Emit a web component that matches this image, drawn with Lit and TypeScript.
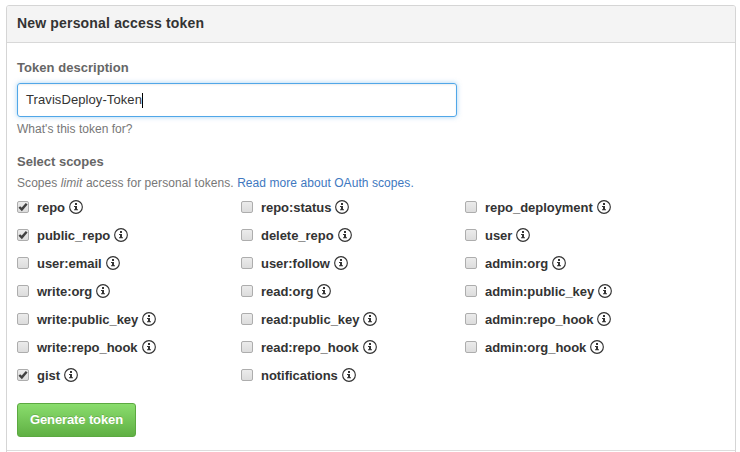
import { LitElement, html, css } from "lit";
import { customElement, property } from "lit/decorators.js";
import { classMap } from "lit/directives/class-map.js";

interface Scope {
  name: string;
  checked?: boolean;
}

const SCOPES: Scope[] = [
  { name: "repo", checked: true },
  { name: "repo:status" },
  { name: "repo_deployment" },
  { name: "public_repo", checked: true },
  { name: "delete_repo" },
  { name: "user" },
  { name: "user:email" },
  { name: "user:follow" },
  { name: "admin:org" },
  { name: "write:org" },
  { name: "read:org" },
  { name: "admin:public_key" },
  { name: "write:public_key" },
  { name: "read:public_key" },
  { name: "admin:repo_hook" },
  { name: "write:repo_hook" },
  { name: "read:repo_hook" },
  { name: "admin:org_hook" },
  { name: "gist", checked: true },
  { name: "notifications" },
];

@customElement("scope-option")
export class ScopeOption extends LitElement {
  @property() name = "";
  @property({ type: Boolean }) checked = false;

  static styles = css`
    :host {
      display: flex;
      align-items: center;
      height: 28px;
    }
    .box {
      box-sizing: border-box;
      width: 12px;
      height: 12px;
      border: 1px solid #adadad;
      border-radius: 2px;
      background: linear-gradient(#ebebeb, #dcdcdc);
      margin-right: 8px;
      display: flex;
    }
    .box svg {
      display: block;
      width: 10px;
      height: 10px;
    }
    .name {
      padding-top: 2px;
      font-weight: bold;
      letter-spacing: -0.04px;
    }
    .info {
      width: 14px;
      height: 14px;
      margin-left: 4px;
    }
  `;

  render() {
    return html`
      <span class=${classMap({ box: true, on: this.checked })}>
        ${this.checked
          ? html`<svg viewBox="0 0 10 10"><path d="M1.3 5 L3.8 7.4 L8.7 1.8" fill="none" stroke="#404040" stroke-width="2.4" /></svg>`
          : ""}
      </span>
      <span class="name">${this.name}</span>
      <svg class="info" viewBox="0 0 14 14">
        <circle cx="7" cy="7" r="6.35" fill="none" stroke="#333" stroke-width="1.15" />
        <path d="M6 3.1h2v1.8H6zM5 6h3v3.2h1v1H5v-1h1V7H5z" fill="#333" />
      </svg>
    `;
  }
}

@customElement("app-root")
export class AppRoot extends LitElement {
  static styles = css`
    :host {
      display: block;
      box-sizing: border-box;
      height: 452px;
      padding: 5px 4px 0 6px;
      overflow: hidden;
      background: #fff;
      color: #333;
      font: 13px/18px "Liberation Sans", Arial, sans-serif;
    }
    .panel {
      box-sizing: border-box;
      height: 460px;
      border: 1px solid #d5d5d5;
      border-radius: 3px;
      overflow: hidden;
    }
    .title {
      box-sizing: border-box;
      height: 37px;
      padding: 8px 10px;
      border-bottom: 1px solid #d8d8d8;
      background: #f4f4f4;
      font-size: 14px;
      font-weight: bold;
      line-height: 19px;
      letter-spacing: 0.17px;
    }
    .body {
      box-sizing: border-box;
      height: 408px;
      padding: 16px 10px 0;
      border-bottom: 1px solid #ddd;
    }
    .label {
      color: #666;
      font-weight: bold;
      letter-spacing: 0.04px;
    }
    .field {
      box-sizing: border-box;
      display: flex;
      align-items: center;
      width: 440px;
      height: 34px;
      margin-top: 6px;
      padding: 0 8px;
      border: 1px solid #51a7e8;
      border-radius: 3px;
      box-shadow: inset 0 1px 2px rgba(0, 0, 0, 0.075), 0 0 5px rgba(81, 167, 232, 0.5);
      letter-spacing: 0.09px;
    }
    .caret {
      width: 1px;
      height: 15px;
      background: #000;
    }
    .note {
      color: #777;
      font-size: 12px;
      letter-spacing: 0.065px;
    }
    .hint {
      margin-top: 3px;
      letter-spacing: 0.02px;
    }
    .scopes-label {
      margin-top: 15px;
      letter-spacing: 0;
    }
    .scopes-note {
      margin-top: 3px;
    }
    .link {
      color: #4078c0;
    }
    .grid {
      display: grid;
      grid-template-columns: repeat(3, 224px);
      margin-top: 1px;
    }
    .button {
      box-sizing: border-box;
      width: 119px;
      height: 34px;
      margin-top: 14px;
      border: 1px solid #5ca941;
      border-radius: 3px;
      background: linear-gradient(#8add6d, #60b044);
      color: #fff;
      font-weight: bold;
      line-height: 32px;
      text-align: center;
      letter-spacing: -0.12px;
      text-shadow: 0 -1px 0 rgba(0, 0, 0, 0.15);
    }
  `;

  render() {
    return html`
      <div class="panel">
        <div class="title">New personal access token</div>
        <div class="body">
          <div class="label">Token description</div>
          <div class="field"><span class="value">TravisDeploy-Token</span><span class="caret"></span></div>
          <div class="note hint">What's this token for?</div>
          <div class="label scopes-label">Select scopes</div>
          <div class="note scopes-note">
            Scopes <em>limit</em> access for personal tokens. <span class="link">Read more about OAuth scopes.</span>
          </div>
          <div class="grid">
            ${SCOPES.map((s) => html`<scope-option .name=${s.name} .checked=${!!s.checked}></scope-option>`)}
          </div>
          <div class="button">Generate token</div>
        </div>
      </div>
    `;
  }
}
